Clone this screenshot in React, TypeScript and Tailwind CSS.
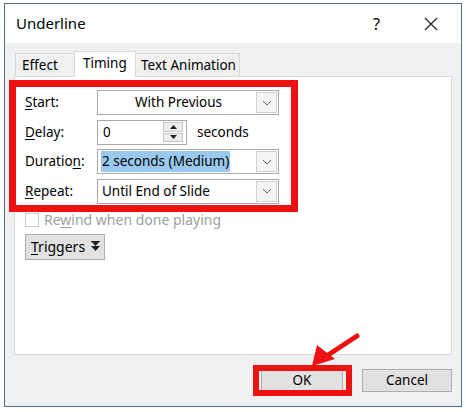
import React from 'react';

const font = { fontFamily: '"Noto Sans", "Open Sans", sans-serif' };

function Chevron() {
  return (
    <svg width="10" height="6" viewBox="0 0 10 6">
      <path d="M1 1 L5 5 L9 1" fill="none" stroke="#606060" strokeWidth="1" />
    </svg>
  );
}

function ComboBox({ value, centered, selected }: { value: string; centered?: boolean; selected?: boolean }) {
  return (
    <div className="flex items-center w-[182px] h-[25px] border border-[#a9a9a9] bg-white">
      <div className={`flex-1 flex items-center pl-[3px] ${centered ? 'justify-center' : ''}`}>
        <span className={selected ? 'bg-[#99c9ef] px-[1px]' : 'px-[1px]'}>{value}</span>
      </div>
      <div className="w-[21px] h-[21px] mr-[1px] border border-[#d0d0d0] bg-[#f4f4f4] flex items-center justify-center">
        <Chevron />
      </div>
    </div>
  );
}

function Spinner() {
  return (
    <div className="flex items-center w-[90px] h-[25px] border border-[#a9a9a9] bg-white">
      <span className="flex-1 pl-[5px]">0</span>
      <div className="w-[20px] h-[20px] mr-[3px] flex flex-col gap-[1px]">
        <div className="flex-1 border border-[#c8c8c8] bg-[#ececec] flex items-center justify-center">
          <svg width="7" height="4" viewBox="0 0 7 4"><path d="M0 4 L3.5 0 L7 4 Z" fill="#202020" /></svg>
        </div>
        <div className="flex-1 border border-[#c8c8c8] bg-[#ececec] flex items-center justify-center">
          <svg width="7" height="4" viewBox="0 0 7 4"><path d="M0 0 L3.5 4 L7 0 Z" fill="#202020" /></svg>
        </div>
      </div>
    </div>
  );
}

function Row({ label, children }: { label: React.ReactNode; children: React.ReactNode }) {
  return (
    <div className="flex items-center h-[25px]">
      <div className="w-[72px]">{label}</div>
      {children}
    </div>
  );
}

export default function App() {
  return (
    <div className="relative w-[466px] h-[412px] bg-white text-[13.5px] text-black overflow-hidden" style={font}>
      <div className="ml-[4px] mt-[3px] w-[458px] h-[404px] border border-[#4f7191] flex flex-col">
        {/* Title bar */}
        <div className="h-[39px] bg-white flex items-center pl-[11px] shrink-0">
          <span className="text-[15px]">Underline</span>
          <span className="ml-auto text-[16px] mr-[44px]">?</span>
          <svg width="14" height="14" viewBox="0 0 14 14" className="mr-[23px]">
            <path d="M1 1 L13 13 M13 1 L1 13" stroke="#202020" strokeWidth="1.2" />
          </svg>
        </div>

        {/* Body */}
        <div className="flex-1 bg-[#f0f0f0] flex flex-col px-[9px]">
          {/* Tabs */}
          <div className="flex items-end h-[33px] pl-[1px]">
            <div className="w-[59px] h-[23px] pl-[6px] flex items-center border border-b-0 border-r-0 border-[#d9d9d9] bg-[#f0f0f0]">Effect</div>
            <div className="w-[62px] h-[26px] pl-[8px] flex items-start pt-[1px] border border-b-0 border-[#d9d9d9] bg-white -mb-[1px] relative">Timing</div>
            <div className="w-[104px] h-[23px] pl-[5px] flex items-center border border-b-0 border-l-0 border-[#d9d9d9] bg-[#f0f0f0]">Text Animation</div>
          </div>

          {/* Panel */}
          <div className="h-[279px] bg-white border border-[#d9d9d9] pl-[10px] pt-[13px] flex flex-col">
            <div className="flex flex-col gap-[4.5px]">
              <Row label={<span><u className="underline-offset-2">S</u>tart:</span>}>
                <ComboBox value="With Previous" centered />
              </Row>
              <Row label={<span><u className="underline-offset-2">D</u>elay:</span>}>
                <Spinner />
                <span className="ml-[10px]">seconds</span>
              </Row>
              <Row label={<span>Duratio<u className="underline-offset-2">n</u>:</span>}>
                <ComboBox value="2 seconds (Medium)" selected />
              </Row>
              <Row label={<span><u className="underline-offset-2">R</u>epeat:</span>}>
                <ComboBox value="Until End of Slide" />
              </Row>
            </div>

            <div className="flex items-center mt-[8px] h-[16px] text-[#a0a0a0] text-[14px]">
              <div className="w-[14px] h-[14px] border border-[#cccccc] bg-white mr-[5px]" />
              <span>Re<u className="underline-offset-2">w</u>ind when done playing</span>
            </div>

            <div className="mt-[6px] w-[80px] h-[26px] bg-[#e1e1e1] border border-[#adadad] flex items-center pl-[5px] gap-[6px] text-[14px]">
              <span><u className="underline-offset-2">T</u>riggers</span>
              <svg width="9" height="11" viewBox="0 0 9 11">
                <path d="M0 0 L9 0 L4.5 5 Z M0 5 L9 5 L4.5 10 Z" fill="#202020" />
                <path d="M0 0.5 H9" stroke="#202020" strokeWidth="1" />
              </svg>
            </div>
          </div>

          {/* Footer */}
          <div className="flex justify-end items-center gap-[19px] pt-[14px]">
            <div className="w-[82px] h-[23px] bg-[#e1e1e1] border border-[#adadad] flex items-center justify-center">OK</div>
            <div className="w-[90px] h-[23px] bg-[#e1e1e1] border border-[#adadad] flex items-center justify-center">Cancel</div>
          </div>
        </div>
      </div>

      {/* Annotations */}
      <div className="absolute left-[9px] top-[80px] w-[289px] h-[132px] border-[7px] border-[#ee1111]" />
      <div className="absolute left-[253px] top-[365px] w-[99px] h-[31px] border-[6px] border-[#ee1111]" />
      <svg className="absolute left-0 top-0" width="466" height="412">
        <path d="M357 336 L325 357" stroke="#ee1111" strokeWidth="5" strokeLinecap="round" />
        <path d="M312 366 L317 345 L335 359 Z" fill="#ee1111" />
      </svg>
    </div>
  );
}
